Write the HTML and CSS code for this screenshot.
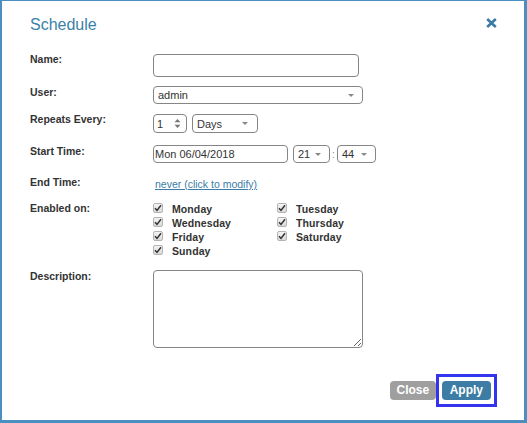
FILE: index.html
```html
<!DOCTYPE html>
<html>
<head>
<meta charset="utf-8">
<title>Schedule</title>
<link rel="stylesheet" href="styles.css">
</head>
<body>
<div class="dialog">
  <div class="header">
    <h1 class="title">Schedule</h1>
    <button class="close-x" aria-label="Close">
      <svg width="11" height="10" viewBox="0 0 11 10"><path d="M1.2 1 L9.8 9 M9.8 1 L1.2 9" stroke="#3a7aa6" stroke-width="2.6" fill="none"/></svg>
    </button>
  </div>
  <div class="form">
    <div class="row row-name">
      <div class="lbl">Name:</div>
      <div class="field name-field"></div>
    </div>
    <div class="row row-user">
      <div class="lbl">User:</div>
      <div class="field select user-select"><span class="val">admin</span><span class="arrow"></span></div>
    </div>
    <div class="row row-repeat">
      <div class="lbl">Repeats Every:</div>
      <div class="ctrls">
        <div class="field spinner"><span class="val">1</span>
          <svg class="spin" width="7" height="11" viewBox="0 0 7 11"><path d="M3.5 1 L6.5 4.2 L0.5 4.2 Z M3.5 10 L6.5 6.8 L0.5 6.8 Z" fill="#777"/></svg>
        </div>
        <div class="field select days-select"><span class="val">Days</span><span class="arrow"></span></div>
      </div>
    </div>
    <div class="row row-start">
      <div class="lbl">Start Time:</div>
      <div class="ctrls">
        <div class="field date-field"><span class="val">Mon 06/04/2018</span></div>
        <div class="field select hour-select"><span class="val">21</span><span class="arrow"></span></div>
        <span class="colon">:</span>
        <div class="field select min-select"><span class="val">44</span><span class="arrow"></span></div>
      </div>
    </div>
    <div class="row row-end">
      <div class="lbl">End Time:</div>
      <a class="link" href="#">never (click to modify)</a>
    </div>
    <div class="row row-enabled">
      <div class="lbl">Enabled on:</div>
      <div class="days">
        <div class="day"><span class="cb"><svg width="8" height="8" viewBox="0 0 8 8"><path d="M1 4.2 L3 6.4 L7 1.2" stroke="#333" stroke-width="1.5" fill="none"/></svg></span>Monday</div>
        <div class="day"><span class="cb"><svg width="8" height="8" viewBox="0 0 8 8"><path d="M1 4.2 L3 6.4 L7 1.2" stroke="#333" stroke-width="1.5" fill="none"/></svg></span>Tuesday</div>
        <div class="day"><span class="cb"><svg width="8" height="8" viewBox="0 0 8 8"><path d="M1 4.2 L3 6.4 L7 1.2" stroke="#333" stroke-width="1.5" fill="none"/></svg></span>Wednesday</div>
        <div class="day"><span class="cb"><svg width="8" height="8" viewBox="0 0 8 8"><path d="M1 4.2 L3 6.4 L7 1.2" stroke="#333" stroke-width="1.5" fill="none"/></svg></span>Thursday</div>
        <div class="day"><span class="cb"><svg width="8" height="8" viewBox="0 0 8 8"><path d="M1 4.2 L3 6.4 L7 1.2" stroke="#333" stroke-width="1.5" fill="none"/></svg></span>Friday</div>
        <div class="day"><span class="cb"><svg width="8" height="8" viewBox="0 0 8 8"><path d="M1 4.2 L3 6.4 L7 1.2" stroke="#333" stroke-width="1.5" fill="none"/></svg></span>Saturday</div>
        <div class="day"><span class="cb"><svg width="8" height="8" viewBox="0 0 8 8"><path d="M1 4.2 L3 6.4 L7 1.2" stroke="#333" stroke-width="1.5" fill="none"/></svg></span>Sunday</div>
      </div>
    </div>
    <div class="row row-desc">
      <div class="lbl">Description:</div>
      <textarea class="desc"></textarea>
    </div>
  </div>
  <div class="footer">
    <button class="btn btn-close">Close</button>
    <span class="focus-ring"><button class="btn btn-apply">Apply</button></span>
  </div>
</div>
</body>
</html>
```
FILE: styles.css
```css
html, body {
  margin: 0;
  padding: 0;
  background: #fff;
}
body {
  font-family: "Liberation Sans", Arial, sans-serif;
  color: #333;
}
.dialog {
  width: 527px;
  height: 423px;
  box-sizing: border-box;
  border-style: solid;
  border-color: #4a8fc0;
  border-width: 1px 3px 3px 2px;
  display: flex;
  flex-direction: column;
  background: #fff;
}
.header {
  display: flex;
  justify-content: space-between;
  align-items: flex-start;
  padding: 14px 27px 0 28px;
}
.title {
  margin: 0;
  font-size: 16px;
  line-height: 20px;
  font-weight: normal;
  color: #3b7fa8;
}
.close-x {
  margin-top: 3px;
  padding: 0;
  border: 0;
  background: none;
  width: 11px;
  height: 10px;
  display: block;
}
.close-x svg { display: block; }
.form {
  padding-left: 28px;
  display: flex;
  flex-direction: column;
}
.row {
  display: flex;
  align-items: flex-start;
}
.lbl {
  width: 123px;
  flex: none;
  font-size: 10.5px;
  line-height: 12px;
  font-weight: bold;
  color: #333;
}
.field {
  box-sizing: border-box;
  border: 1px solid #858585;
  border-radius: 4px;
  background: #fff;
  display: flex;
  align-items: center;
  font-size: 11px;
  color: #333;
}
.val { padding-left: 4px; line-height: 14px; }
.select { justify-content: space-between; }
.arrow {
  width: 0;
  height: 0;
  border-left: 3px solid transparent;
  border-right: 3px solid transparent;
  border-top: 3.5px solid #888;
  margin-right: 8px;
}
.ctrls { display: flex; align-items: center; }

.row-name { margin-top: 19px; }
.row-name .lbl { margin-top: -1px; }
.name-field { width: 206px; height: 23px; }

.row-user { margin-top: 9px; }
.user-select { width: 210px; height: 18px; }

.row-repeat { margin-top: 10px; }
.row-repeat .lbl { margin-top: -1px; }
.spinner { width: 34px; height: 19px; justify-content: space-between; }
.spinner .val { padding-left: 3px; }
.spin { margin-right: 5px; }
.days-select { width: 66px; height: 19px; margin-left: 5px; }
.days-select .arrow { margin-right: 9px; }

.row-start { margin-top: 12px; }
.date-field { width: 135px; height: 18px; }
.date-field .val { padding-left: 1px; }
.hour-select { width: 37px; height: 18px; margin-left: 5px; }
.hour-select .arrow { margin-right: 8px; }
.colon { width: 7px; text-align: center; font-size: 10px; color: #888; }
.min-select { width: 39px; height: 18px; }

.row-end { margin-top: 13px; }
.link {
  margin-top: 2px;
  margin-left: 2px;
  font-size: 10.5px;
  line-height: 12px;
  color: #3b7ca6;
  text-decoration: underline;
}

.row-enabled { margin-top: 12px; }
.days {
  display: grid;
  grid-template-columns: 124px 100px;
}
.day {
  display: flex;
  align-items: flex-start;
  font-size: 10.5px;
  line-height: 14px;
  font-weight: bold;
  color: #333;
  letter-spacing: 0.1px;
}
.cb {
  box-sizing: border-box;
  width: 10px;
  height: 10px;
  margin-top: 1px;
  margin-right: 9px;
  border: 1px solid #b4b4b4;
  border-radius: 2px;
  background: linear-gradient(#f4f4f4, #dadada);
  display: flex;
  align-items: center;
  justify-content: center;
}
.cb svg { display: block; }

.row-desc { margin-top: 12px; }
.desc {
  box-sizing: border-box;
  width: 210px;
  height: 78px;
  margin: 0;
  border: 1px solid #858585;
  border-radius: 4px;
  font-family: "Liberation Sans", Arial, sans-serif;
  font-size: 11px;
  outline: none;
}

.footer {
  margin-top: auto;
  display: flex;
  justify-content: flex-end;
  align-items: center;
  padding: 0 27px 13px 0;
}
.focus-ring {
  display: flex;
  border: 3px solid #3434f0;
  padding: 4px 3px;
}
.btn {
  display: block;
  height: 19px;
  border: 0;
  border-radius: 4px;
  font-family: "Liberation Sans", Arial, sans-serif;
  font-size: 12px;
  font-weight: bold;
  line-height: 19px;
  color: #fff;
  margin: 0;
}
.btn-close {
  background: #9f9f9f;
  padding: 0 6.5px;
}
.btn-apply {
  background: #3d7da5;
  padding: 0 8px;
  outline: none;
}
```
